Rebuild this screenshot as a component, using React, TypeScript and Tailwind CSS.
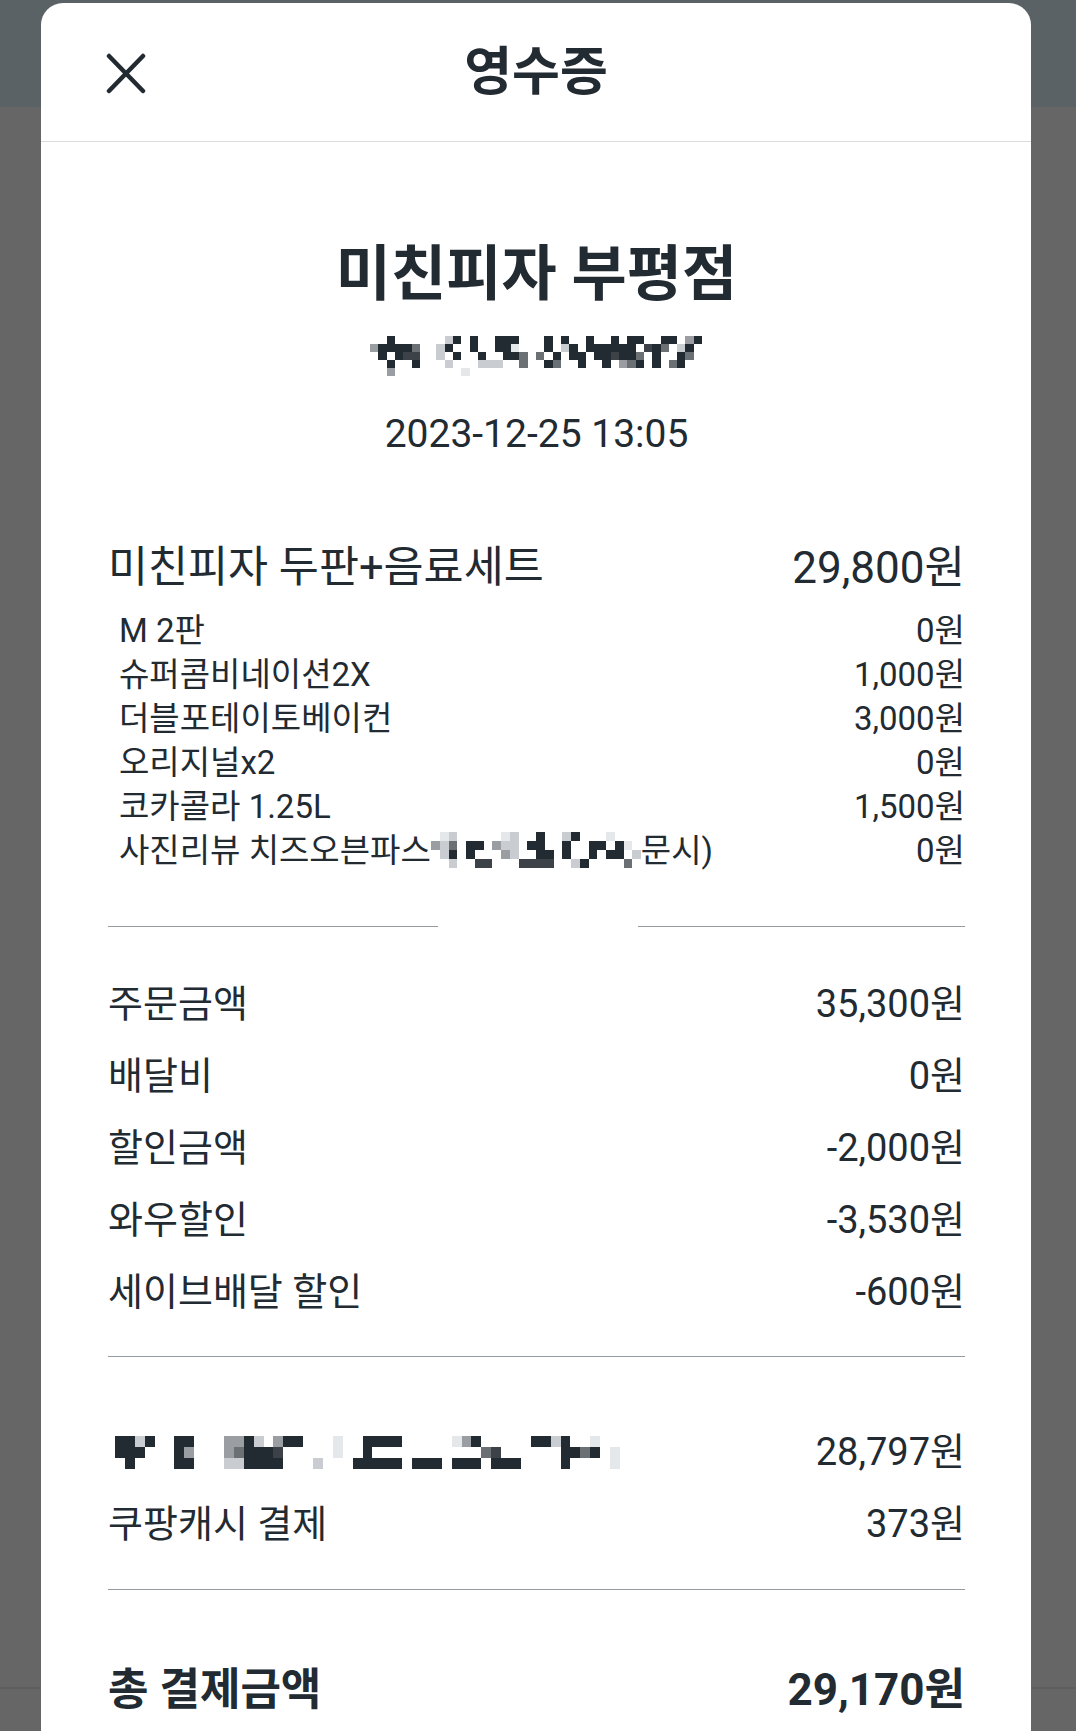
import React from "react";

const shades: Record<string, string> = {
    "#": "#222a32",
    "=": "#3d4248",
    "+": "#6b7075",
    "-": "#9a9ea3",
    ".": "#c9cdd1",
    ",": "#e5e8eb",
};

// pixelated (censored) text, drawn as a mosaic of blocks
function Mosaic({ rows, cw, ch }: { rows: string[]; cw: number; ch: number }) {
    const cols = Math.max(...rows.map((r) => r.length));
    return (
        <svg width={cols * cw} height={rows.length * ch} shapeRendering="crispEdges" className="block">
            {rows.map((row, y) =>
                row.split("").map((c, x) =>
                    shades[c] ? (
                        <rect key={`${x}-${y}`} x={x * cw} y={y * ch} width={cw} height={ch} fill={shades[c]} />
                    ) : null
                )
            )}
        </svg>
    );
}

const options = [
    { name: "M 2판", price: "0원" },
    { name: "슈퍼콤비네이션2X", price: "1,000원" },
    { name: "더블포테이토베이컨", price: "3,000원" },
    { name: "오리지널x2", price: "0원" },
    { name: "코카콜라 1.25L", price: "1,500원" },
];

const summary = [
    { label: "주문금액", value: "35,300원" },
    { label: "배달비", value: "0원" },
    { label: "할인금액", value: "-2,000원" },
    { label: "와우할인", value: "-3,530원" },
    { label: "세이브배달 할인", value: "-600원" },
];

export default function App() {
    return (
        <div className="relative h-[1731px] w-[1076px] overflow-hidden font-['Roboto','Noto_Sans_CJK_KR',sans-serif] text-[#222a32]">
            {/* page behind the sheet */}
            <div className="flex h-full flex-col">
                <div className="h-[107px] bg-[#5a6266]" />
                <div className="h-[1580px] bg-[#666666]" />
                <div className="h-[2px] bg-[#5e5e5e]" />
                <div className="flex-1 bg-[#666666]" />
            </div>

            {/* receipt sheet */}
            <div className="absolute left-[41px] top-[3px] h-[1740px] w-[990px] rounded-t-[22px] bg-white">
                <div className="grid h-[139px] grid-cols-[1fr_auto_1fr] items-center border-b border-[#dcdcdc]">
                    <div className="pl-[65px] pt-[2px]">
                        <svg width="40" height="41" viewBox="0 0 40 41">
                            <path d="M3 3 L37 38 M37 3 L3 38" stroke="#222a32" strokeWidth="4.5" strokeLinecap="round" fill="none" />
                        </svg>
                    </div>
                    <div className="pt-[2px] text-[52px] font-bold leading-none">영수증</div>
                    <div />
                </div>

                <div className="pl-[67px] pr-[66px]">
                    <div className="mt-[97px] flex h-[72px] items-center justify-center text-[60px] font-bold leading-none">
                        미친피자 부평점
                    </div>
                    <div className="mt-[25px] flex h-[40px] items-center justify-center pr-[2px]">
                        <Mosaic
                            cw={8.3}
                            ch={8}
                            rows={[
                                "  #      .# #  ###   # #  #  # ##  ## -#",
                                "-####+  .#  #  ##,   # .# ###### =#+ .#",
                                " # #==  . #  #  ##+ + # ## ##=##+ #  #+",
                                "  #  #   .   ...  +  #+  #  # -+# # +#",
                                "  -        ,                          ",
                            ]}
                        />
                    </div>
                    <div className="mt-[34px] flex h-[48px] items-center justify-center text-[39px] leading-none">
                        2023-12-25 13:05
                    </div>

                    <div className="mt-[85px] flex h-[50px] items-center justify-between leading-none">
                        <span className="text-[43.5px]">미친피자 두판+음료세트</span>
                        <span className="text-[44px]">29,800원</span>
                    </div>
                    <div className="mt-[15px] pl-[11px] text-[33px] leading-none">
                        {options.map((o) => (
                            <div key={o.name} className="flex h-[44px] items-center justify-between">
                                <span>{o.name}</span>
                                <span>{o.price}</span>
                            </div>
                        ))}
                        <div className="flex h-[44px] items-center justify-between">
                            <span className="flex items-center">
                                사진리뷰 치즈오븐파스
                                <Mosaic
                                    cw={8.75}
                                    ch={9}
                                    rows={[
                                        " ,.     ,.  #  .#   ,   ",
                                        "-.+ ## -.. ##  #  ## #, ",
                                        " .# #   -.  ## #  # ## .",
                                        "  .  ==   ====  .#    + ",
                                    ]}
                                />
                                문시)
                            </span>
                            <span>0원</span>
                        </div>
                    </div>

                    <div className="mt-[54px] flex h-px">
                        <div className="w-[330px] bg-[#959ca1]" />
                        <div className="w-[200px]" />
                        <div className="flex-1 bg-[#959ca1]" />
                    </div>

                    <div className="mt-[41px] text-[38px] leading-none">
                        {summary.map((s) => (
                            <div key={s.label} className="flex h-[72px] items-center justify-between">
                                <span>{s.label}</span>
                                <span>{s.value}</span>
                            </div>
                        ))}
                    </div>

                    <div className="mt-[28px] h-px bg-[#959ca1]" />

                    <div className="mt-[59px] text-[38px] leading-none">
                        <div className="flex h-[72px] items-center justify-between">
                            <span className="pl-[7px]">
                                <Mosaic
                                    cw={9.9}
                                    ch={11}
                                    rows={[
                                        "##.#  ##   --#. -##   ,  ####     ,-#     ##.#  ,",
                                        "###   #-   -+###=     ,  #           +=      ##+# ,",
                                        " #    ##   ..####   .   ##### ### ### ###    #    ,",
                                    ]}
                                />
                            </span>
                            <span>28,797원</span>
                        </div>
                        <div className="flex h-[72px] items-center justify-between">
                            <span>쿠팡캐시 결제</span>
                            <span>373원</span>
                        </div>
                    </div>

                    <div className="mt-[29px] h-px bg-[#959ca1]" />

                    <div className="mt-[65px] flex h-[70px] items-center justify-between font-bold leading-none">
                        <span className="text-[44px]">총 결제금액</span>
                        <span className="text-[44px]">29,170원</span>
                    </div>
                </div>
            </div>
        </div>
    );
}
